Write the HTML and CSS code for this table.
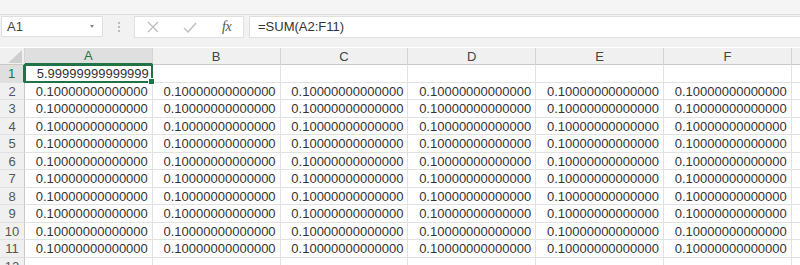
FILE: index.html
```html
<!DOCTYPE html>
<html>
<head>
<meta charset="utf-8">
<link rel="stylesheet" href="styles.css">
</head>
<body>
<div class="top"></div>
<div class="fbar">
  <div class="namebox"><span>A1</span><span class="dd"></span></div>
  <div class="grip"><i></i><i></i><i></i></div>
  <div class="actions">
    <svg class="ic" width="12" height="12" viewBox="0 0 12 12"><path d="M1 1L11 11M11 1L1 11" stroke="#bdbdbd" stroke-width="1.3" fill="none"/></svg>
    <svg class="ic" width="14" height="11" viewBox="0 0 14 11"><path d="M1 6L5 10L13 1" stroke="#bdbdbd" stroke-width="1.4" fill="none"/></svg>
    <span class="fx">fx</span>
  </div>
  <div class="formula">=SUM(A2:F11)</div>
</div>
<div class="sheet" id="sheet">
  <div class="corner"><svg width="14" height="13" viewBox="0 0 14 13"><path d="M14 0L14 13L0 13Z" fill="#cfcfcf"/></svg></div>
  <div class="ch sel">A</div><div class="ch">B</div><div class="ch">C</div><div class="ch">D</div><div class="ch">E</div><div class="ch">F</div><div class="ch last"></div>
  <div class="rh sel">1</div><div class="c active">5.99999999999999<span class="handle"></span></div><div class="c"></div><div class="c"></div><div class="c"></div><div class="c"></div><div class="c"></div><div class="c last"></div>
  <div class="rh">2</div><div class="c">0.10000000000000</div><div class="c">0.10000000000000</div><div class="c">0.10000000000000</div><div class="c">0.10000000000000</div><div class="c">0.10000000000000</div><div class="c">0.10000000000000</div><div class="c last"></div>
  <div class="rh">3</div><div class="c">0.10000000000000</div><div class="c">0.10000000000000</div><div class="c">0.10000000000000</div><div class="c">0.10000000000000</div><div class="c">0.10000000000000</div><div class="c">0.10000000000000</div><div class="c last"></div>
  <div class="rh">4</div><div class="c">0.10000000000000</div><div class="c">0.10000000000000</div><div class="c">0.10000000000000</div><div class="c">0.10000000000000</div><div class="c">0.10000000000000</div><div class="c">0.10000000000000</div><div class="c last"></div>
  <div class="rh">5</div><div class="c">0.10000000000000</div><div class="c">0.10000000000000</div><div class="c">0.10000000000000</div><div class="c">0.10000000000000</div><div class="c">0.10000000000000</div><div class="c">0.10000000000000</div><div class="c last"></div>
  <div class="rh">6</div><div class="c">0.10000000000000</div><div class="c">0.10000000000000</div><div class="c">0.10000000000000</div><div class="c">0.10000000000000</div><div class="c">0.10000000000000</div><div class="c">0.10000000000000</div><div class="c last"></div>
  <div class="rh">7</div><div class="c">0.10000000000000</div><div class="c">0.10000000000000</div><div class="c">0.10000000000000</div><div class="c">0.10000000000000</div><div class="c">0.10000000000000</div><div class="c">0.10000000000000</div><div class="c last"></div>
  <div class="rh">8</div><div class="c">0.10000000000000</div><div class="c">0.10000000000000</div><div class="c">0.10000000000000</div><div class="c">0.10000000000000</div><div class="c">0.10000000000000</div><div class="c">0.10000000000000</div><div class="c last"></div>
  <div class="rh">9</div><div class="c">0.10000000000000</div><div class="c">0.10000000000000</div><div class="c">0.10000000000000</div><div class="c">0.10000000000000</div><div class="c">0.10000000000000</div><div class="c">0.10000000000000</div><div class="c last"></div>
  <div class="rh">10</div><div class="c">0.10000000000000</div><div class="c">0.10000000000000</div><div class="c">0.10000000000000</div><div class="c">0.10000000000000</div><div class="c">0.10000000000000</div><div class="c">0.10000000000000</div><div class="c last"></div>
  <div class="rh">11</div><div class="c">0.10000000000000</div><div class="c">0.10000000000000</div><div class="c">0.10000000000000</div><div class="c">0.10000000000000</div><div class="c">0.10000000000000</div><div class="c">0.10000000000000</div><div class="c last"></div>
  <div class="rh">12</div><div class="c"></div><div class="c"></div><div class="c"></div><div class="c"></div><div class="c"></div><div class="c"></div><div class="c last"></div>
</div>
</body>
</html>
```
FILE: styles.css
```css
html, body {
  margin: 0;
  padding: 0;
  width: 800px;
  height: 265px;
  overflow: hidden;
  background: #ffffff;
  font-family: "Liberation Sans", Arial, sans-serif;
  color: #333;
}
.top {
  height: 14px;
  background: #f5f5f5;
  border-bottom: 1px solid #dedede;
}
.fbar {
  height: 32px;
  background: #f2f2f2;
  display: flex;
  align-items: flex-start;
  padding-top: 1px;
  box-sizing: border-box;
}
.namebox {
  margin-left: 1px;
  width: 102px;
  height: 21px;
  background: #fff;
  border: 1px solid #e0e0e0;
  box-sizing: border-box;
  display: flex;
  align-items: center;
  justify-content: space-between;
  padding: 0 8px 0 5px;
  font-size: 13px;
  color: #444;
}
.dd {
  width: 0; height: 0;
  border-left: 2.5px solid transparent;
  border-right: 2.5px solid transparent;
  border-top: 3px solid #888;
}
.grip {
  width: 31px;
  height: 21px;
  display: flex;
  flex-direction: column;
  align-items: center;
  justify-content: center;
  gap: 2px;
}
.grip i {
  width: 2px; height: 2px;
  background: #a8a8a8;
  border-radius: 1px;
}
.actions {
  width: 110px;
  height: 22px;
  background: #fff;
  border: 1px solid #e0e0e0;
  box-sizing: border-box;
  display: flex;
  align-items: center;
  padding-left: 12px;
}
.actions svg:nth-child(1) { margin-right: 24px; }
.actions svg:nth-child(2) { margin-right: 25px; }
.fx {
  font-family: "Liberation Serif", "Times New Roman", serif;
  font-style: italic;
  font-size: 14px;
  color: #555;
  letter-spacing: -0.5px;
}
.formula {
  margin-left: 5px;
  flex: 1;
  height: 22px;
  background: #fff;
  border: 1px solid #e0e0e0;
  border-right: none;
  box-sizing: border-box;
  padding-left: 8px;
  font-size: 13px;
  line-height: 20px;
  color: #333;
}
.sheet {
  display: grid;
  grid-template-columns: 25px repeat(6, 127.8px) 1fr;
  grid-template-rows: 17px repeat(12, 17.5px);
  background: #fff;
  margin-top: 1px;
}
.corner {
  background: #f0f0f0;
  border-right: 1px solid #d4d4d4;
  border-bottom: 1px solid #c8c8c8;
  box-sizing: border-box;
  display: flex;
  align-items: flex-end;
  justify-content: flex-end;
  padding: 0 2px 1px 0;
}
.ch {
  background: #f0f0f0;
  border-right: 1px solid #d4d4d4;
  border-bottom: 1px solid #c8c8c8;
  box-sizing: border-box;
  text-align: center;
  font-size: 13px;
  line-height: 17px;
  color: #444;
}
.ch.sel {
  background: #dfdfdf;
  color: #217346;
  border-bottom: 2px solid #217346;
  line-height: 16px;
}
.ch.last { border-right: none; }
.rh {
  background: #f0f0f0;
  border-right: 1px solid #c8c8c8;
  border-bottom: 1px solid #e0e0e0;
  box-sizing: border-box;
  text-align: center;
  font-size: 13px;
  line-height: 17px;
  color: #555;
}
.rh.sel {
  background: #dfdfdf;
  color: #217346;
  border-right: 2px solid #217346;
}
.c {
  border-right: 1px solid #e2e2e2;
  border-bottom: 1px solid #e2e2e2;
  box-sizing: border-box;
  text-align: right;
  padding-right: 4px;
  font-size: 13px;
  line-height: 18px;
  color: #333;
  white-space: nowrap;
  overflow: visible;
}
.c.last { border-right: none; }
.c.active {
  position: relative;
  border: 2px solid #217346;
  margin: -1px 0 0 -1px;
  padding-right: 2px;
  line-height: 15px;
}
.handle {
  position: absolute;
  right: -4px;
  bottom: -4px;
  width: 5px;
  height: 5px;
  background: #217346;
  border: 1px solid #fff;
}
```
